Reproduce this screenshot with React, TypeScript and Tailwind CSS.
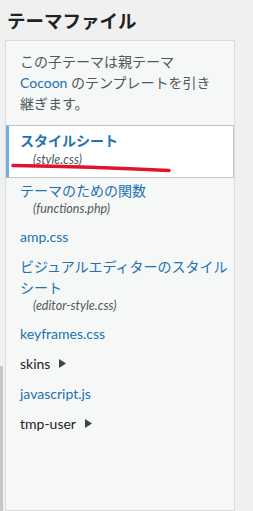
import React from "react";

const files = [
  { name: "テーマのための関数", path: "(functions.php)" },
  { name: "amp.css" },
  { name: "ビジュアルエディターのスタイル", second: "シート", path: "(editor-style.css)" },
  { name: "keyframes.css" },
  { name: "skins", folder: true },
  { name: "javascript.js" },
  { name: "tmp-user", folder: true },
];

const Arrow = () => (
  <svg width="7" height="9" viewBox="0 0 7 9" className="ml-[9px] inline-block">
    <polygon points="0,0 7,4.5 0,9" fill="#3c434a" />
  </svg>
);

const App = () => {
  return (
    <div
      className="relative flex h-[511px] w-full flex-col overflow-hidden bg-[#f0f0f1]"
      style={{ fontFamily: '"Lato", "Noto Sans CJK JP", sans-serif' }}
    >
      <h2 className="h-[40px] pl-[7px] pt-[2px] text-[18.5px] font-bold leading-[38px] text-[#1d2327]">
        テーマファイル
      </h2>

      <div className="ml-[5px] w-[230px] flex-1 border border-[#dcdcde] bg-[#f6f7f7]">
        <p className="pl-[14px] pt-[10px] text-[14px] leading-[21px] text-[#50575e]">
          この子テーマは親テーマ
          <br />
          <span className="text-[#2271b1]">Cocoon</span> のテンプレートを引き
          <br />
          継ぎます。
        </p>

        <ul className="mt-[11px]">
          <li className="border border-l-[3px] border-[#c3c4c7] border-l-[#72aee6] bg-white pb-[9px] pl-[11px] pt-[4px]">
            <div className="text-[14px] font-bold leading-[21px] text-[#2271b1]">
              スタイルシート
            </div>
            <div className="pl-[13px] text-[12.5px] italic leading-[17px] text-[#50575e]">
              (style.css)
            </div>
          </li>
          {files.map((f) => (
            <li key={f.name} className="pb-[7px] pl-[14px] pt-[2px]">
              <div
                className={
                  f.folder
                    ? "flex items-center text-[14px] leading-[21px] text-[#1d2327]"
                    : "text-[14px] leading-[21px] text-[#2271b1]"
                }
              >
                {f.name}
                {f.folder && <Arrow />}
              </div>
              {f.second && (
                <div className="text-[14px] leading-[21px] text-[#2271b1]">{f.second}</div>
              )}
              {f.path && (
                <div className="pl-[13px] text-[12.5px] italic leading-[16px] text-[#50575e]">
                  {f.path}
                </div>
              )}
            </li>
          ))}
        </ul>
      </div>

      <div className="absolute bottom-0 left-0 top-[366px] w-[3px] bg-[#c6c6c6]" />

      <svg className="pointer-events-none absolute left-0 top-0" width="253" height="511">
        <path
          d="M13 165.5 Q 90 166.5 169 170.5"
          stroke="#e2142c"
          strokeWidth="3.5"
          strokeLinecap="round"
          fill="none"
        />
      </svg>
    </div>
  );
};

export default App;
